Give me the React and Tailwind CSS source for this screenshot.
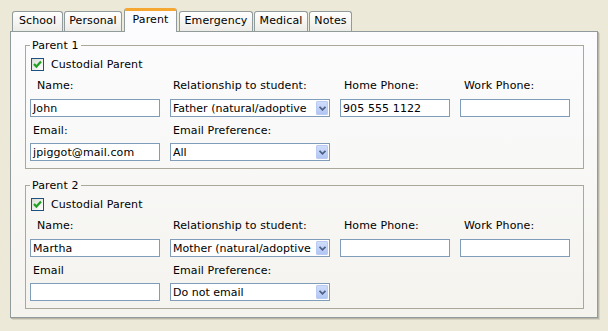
import React from 'react'

const tabs = [
  { label: 'School', w: 'w-[51px]', ml: 'ml-0' },
  { label: 'Personal', w: 'w-[58px]', ml: 'ml-[1px]' },
  { label: 'Parent', w: 'w-[53px]', ml: 'ml-[1px]', active: true },
  { label: 'Emergency', w: 'w-[74px]', ml: 'ml-[1px]' },
  { label: 'Medical', w: 'w-[54px]', ml: 'ml-[1px]' },
  { label: 'Notes', w: 'w-[43px]', ml: 'ml-[1px]' },
]

// the select shows the option cut at the arrow, as on screen
const parents = [
  {
    legend: 'Parent 1',
    name: 'John',
    relation: 'Father (natural/adoptive',
    home: '905 555 1122',
    work: '',
    emailLabel: 'Email:',
    email: 'jpiggot@mail.com',
    pref: 'All',
  },
  {
    legend: 'Parent 2',
    name: 'Martha',
    relation: 'Mother (natural/adoptive',
    home: '',
    work: '',
    emailLabel: 'Email',
    email: '',
    pref: 'Do not email',
  },
]

function TextBox({ value, width }) {
  return (
    <div className={`${width} h-[18px] border border-[#7f9db9] bg-white pl-[2px] flex items-center overflow-hidden whitespace-nowrap`}>
      {value}
    </div>
  )
}

function Select({ value, width }) {
  return (
    <div className={`${width} h-[18px] border border-[#7f9db9] bg-white flex items-center p-[1px]`}>
      <div className="flex-1 whitespace-nowrap pl-[1px] tracking-normal">{value}</div>
      <div className="w-[12px] h-[14px] shrink-0 rounded-[1px] border border-[#b9cbf3] bg-gradient-to-b from-[#d0ddfb] to-[#b2c6f5] flex items-center justify-center">
        <svg width="7" height="5" viewBox="0 0 7 5">
          <path d="M0.5 0.8 L3.5 3.8 L6.5 0.8" fill="none" stroke="#4d6185" strokeWidth="1.8" />
        </svg>
      </div>
    </div>
  )
}

function Checkbox() {
  return (
    <div className="w-[13px] h-[13px] border border-[#1c5180] bg-gradient-to-br from-[#dcdcd7] to-white flex items-center justify-center">
      <svg width="9" height="9" viewBox="0 0 9 9">
        <path d="M1 4 L3.4 6.6 L8 1.6" fill="none" stroke="#21a121" strokeWidth="2.2" />
      </svg>
    </div>
  )
}

function ParentGroup({ parent, className }) {
  return (
    <fieldset className={`border border-[#aca899] pl-[4px] pr-[4px] pt-[6px] pb-[7px] ${className}`}>
      <legend className="px-[2px]">{parent.legend}</legend>
      <div className="flex items-center h-[13px]">
        <div className="ml-[1px]">
          <Checkbox />
        </div>
        <span className="ml-[7px]">Custodial Parent</span>
      </div>
      <div className="flex gap-[10px] mt-[8px]">
        <div className="w-[130px] pl-[7px]">Name:</div>
        <div className="w-[160px] pl-[3px]">Relationship to student:</div>
        <div className="w-[110px] pl-[4px]">Home Phone:</div>
        <div className="w-[110px] pl-[4px]">Work Phone:</div>
      </div>
      <div className="flex gap-[10px] mt-[7px]">
        <TextBox value={parent.name} width="w-[130px]" />
        <Select value={parent.relation} width="w-[160px]" />
        <TextBox value={parent.home} width="w-[110px]" />
        <TextBox value={parent.work} width="w-[110px]" />
      </div>
      <div className="flex gap-[10px] mt-[7px]">
        <div className="w-[130px] pl-[3px]">{parent.emailLabel}</div>
        <div className="w-[160px] pl-[3px]">Email Preference:</div>
      </div>
      <div className="flex gap-[10px] mt-[6px]">
        <TextBox value={parent.email} width="w-[130px]" />
        <Select value={parent.pref} width="w-[160px]" />
      </div>
    </fieldset>
  )
}

export default function App() {
  return (
    <div className="min-h-screen w-[608px] bg-[#ece9d8] font-['DejaVu_Sans',sans-serif] text-[11px] leading-[13px] tracking-[0.1px] text-black">
      <div className="flex items-end pl-[12px] pt-[8px]">
        {tabs.map(tab =>
          tab.active ? (
            <div
              key={tab.label}
              className={`${tab.w} ml-[2px] mr-[1px] h-[24px] -mb-[1px] relative z-10 rounded-t-[3px] border-x border-[#919b9c] border-t-[3px] border-t-[#f5a732] bg-[#fcfcfe] text-center pt-[2px]`}
            >
              {tab.label}
            </div>
          ) : (
            <div
              key={tab.label}
              className={`${tab.w} ${tab.ml} h-[20px] rounded-t-[3px] border-x border-t border-[#919b9c] bg-gradient-to-b from-white to-[#ecebe6] text-center pt-[2px]`}
            >
              {tab.label}
            </div>
          )
        )}
      </div>
      <div className="ml-[10px] w-[588px] border border-[#919b9c] bg-gradient-to-b from-[#fcfcfe] to-[#f4f3ee] pl-[14px] pr-[13px] pt-[7px] pb-[8px] shadow-[1px_1px_0_#b8b6a6,2px_2px_0_#d6d3c3]">
        <ParentGroup parent={parents[0]} />
        <ParentGroup parent={parents[1]} className="mt-[10px]" />
      </div>
    </div>
  )
}
